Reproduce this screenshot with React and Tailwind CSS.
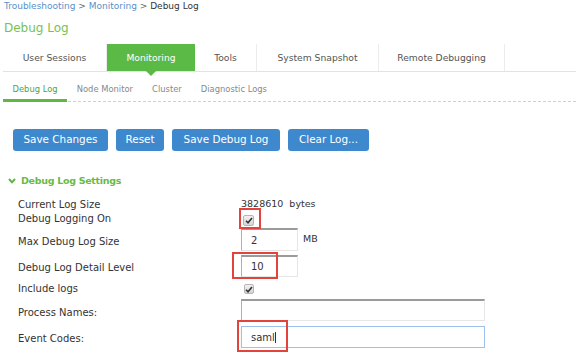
import React from 'react';

const tabs = [
  { name: 'User Sessions', w: 'w-[104px]' },
  { name: 'Monitoring', w: 'w-[88px]', active: true },
  { name: 'Tools', w: 'w-[62px]' },
  { name: 'System Snapshot', w: 'w-[122px]' },
  { name: 'Remote Debugging', w: 'w-[126px]' },
];

const subTabs = ['Debug Log', 'Node Monitor', 'Cluster', 'Diagnostic Logs'];

const Check = ({ className = '' }) => (
  <div className={`flex items-center justify-center rounded-[2px] border border-[#b5b5b5] bg-gradient-to-b from-[#f2f2f2] to-[#d6d6d6] ${className}`}>
    <svg width="8" height="7" viewBox="0 0 8 7">
      <path d="M1 3.8 L3 5.8 L7 1" fill="none" stroke="#333" strokeWidth="1.6" />
    </svg>
  </div>
);

const Input = ({ value, className = '', focus }) => (
  <div
    className={`flex items-center pl-[9px] text-[10px] text-[#333] bg-white ${
      focus
        ? 'border border-[#9dc0ee]'
        : 'border-t-2 border-l border-r border-b border-t-[#9a9a9a] border-l-[#b0b0b0] border-r-[#e6e6e6] border-b-[#e6e6e6]'
    } ${className}`}
  >
    {value}
  </div>
);

const RedBox = ({ className }) => (
  <div className={`absolute border-2 border-[#e2433c] ${className}`} />
);

export default function App() {
  return (
    <div className="relative w-[576px] h-[359px] overflow-hidden bg-white font-['DejaVu_Sans',sans-serif] text-[#333]">
      {/* breadcrumb */}
      <div className="pl-[4px] pt-[1px] h-[12px] text-[9px] leading-[11px]">
        <span className="text-[#5b8fc9]">Troubleshooting</span>
        <span className="text-[#666]"> &gt; </span>
        <span className="text-[#5b8fc9]">Monitoring</span>
        <span className="text-[#666]"> &gt; </span>
        <span className="text-[#333]">Debug Log</span>
      </div>

      {/* title */}
      <div className="pl-[4px] mt-[9px] h-[15px] text-[12px] leading-[15px] text-[#76c255]">Debug Log</div>

      {/* main tabs */}
      <div className="ml-[3px] mt-[8px] flex h-[28px] border-b border-[#e2e2e2]">
        {tabs.map((t) => (
          <div
            key={t.name}
            className={`relative flex items-center justify-center text-[9.2px] ${t.w} ${
              t.active ? 'bg-[#5bb946] text-white' : 'border-r border-[#ececec] text-[#555]'
            }`}
          >
            {t.name}
            {t.active && (
              <div className="absolute left-1/2 -translate-x-1/2 bottom-[-5px] w-0 h-0 border-l-[5px] border-r-[5px] border-t-[5px] border-l-transparent border-r-transparent border-t-[#5bb946]" />
            )}
          </div>
        ))}
      </div>

      {/* sub tabs */}
      <div className="ml-[3px] flex h-[30px] border-b border-dashed border-[#cfcfcf]">
        {subTabs.map((s, i) => (
          <div
            key={s}
            className={`relative flex items-center px-[9.5px] pt-[6px] text-[8.4px] ${
              i === 0 ? 'text-[#4ea43a]' : 'text-[#888]'
            }`}
          >
            {s}
            {i === 0 && <div className="absolute left-0 right-0 bottom-[-1px] h-[3px] bg-[#5bb946]" />}
          </div>
        ))}
      </div>

      {/* buttons */}
      <div className="ml-[13px] mt-[27px] flex gap-[8px]">
        {[
          ['Save Changes', 'w-[95px]'],
          ['Reset', 'w-[48px]'],
          ['Save Debug Log', 'w-[108px]'],
          ['Clear Log...', 'w-[81px]'],
        ].map(([b, w]) => (
          <div
            key={b}
            className={`flex h-[22px] items-center justify-center rounded-[3px] bg-[#3e88cd] text-[10.4px] text-white ${w}`}
          >
            {b}
          </div>
        ))}
      </div>

      {/* section heading */}
      <div className="ml-[8px] mt-[24px] flex h-[12px] items-center gap-[5px]">
        <svg width="8" height="6" viewBox="0 0 8 6">
          <path d="M1 1 L4 4.3 L7 1" fill="none" stroke="#5fb53f" strokeWidth="2" />
        </svg>
        <span className="text-[9.5px] font-bold tracking-[-0.3px] text-[#68bb45]">Debug Log Settings</span>
      </div>

      {/* settings rows */}
      <div className="mt-[10px] text-[10px]">
        <div className="flex h-[14px] items-center">
          <div className="w-[241px] pl-[18px]">Current Log Size</div>
          <div className="text-[9.5px]">3828610&nbsp;&nbsp;bytes</div>
        </div>

        <div className="flex h-[17px] items-center">
          <div className="w-[241px] pl-[18px] pb-[3px]">Debug Logging On</div>
          <div className="relative">
            <Check className="ml-[2px] mt-[2px] w-[11px] h-[11px]" />
            <RedBox className="left-[-2px] top-[-5px] w-[22px] h-[21px]" />
          </div>
        </div>

        <div className="flex h-[23px] items-center">
          <div className="w-[241px] pl-[18px] pt-[3px]">Max Debug Log Size</div>
          <Input value="2" className="w-[57px] h-[23px]" />
          <div className="ml-[5px] text-[9.5px]">MB</div>
        </div>

        <div className="mt-[4px] flex h-[22px] items-center">
          <div className="w-[241px] pl-[18px] pt-[3px]">Debug Log Detail Level</div>
          <div className="relative">
            <Input value="10" className="w-[57px] h-[22px]" />
            <RedBox className="left-[-9px] top-[-3px] w-[46px] h-[27px]" />
          </div>
        </div>

        <div className="flex h-[22px] items-center">
          <div className="w-[241px] pl-[18px]">Include logs</div>
          <Check className="ml-[3px] mt-[2px] w-[10px] h-[10px]" />
        </div>

        <div className="flex h-[22px] items-center">
          <div className="w-[241px] pl-[18px] pt-[5px]">Process Names:</div>
          <Input value="" className="w-[244px] h-[22px]" />
        </div>

        <div className="mt-[5px] flex h-[22px] items-center">
          <div className="w-[241px] pl-[18px] pt-[3px]">Event Codes:</div>
          <div className="relative">
            <Input
              value={
                <span>
                  saml<span className="inline-block w-[1px] h-[11px] bg-[#333] align-middle" />
                </span>
              }
              focus
              className="w-[244px] h-[22px]"
            />
            <RedBox className="left-[-4px] top-[-6px] w-[51px] h-[32px]" />
          </div>
        </div>
      </div>
    </div>
  );
}
